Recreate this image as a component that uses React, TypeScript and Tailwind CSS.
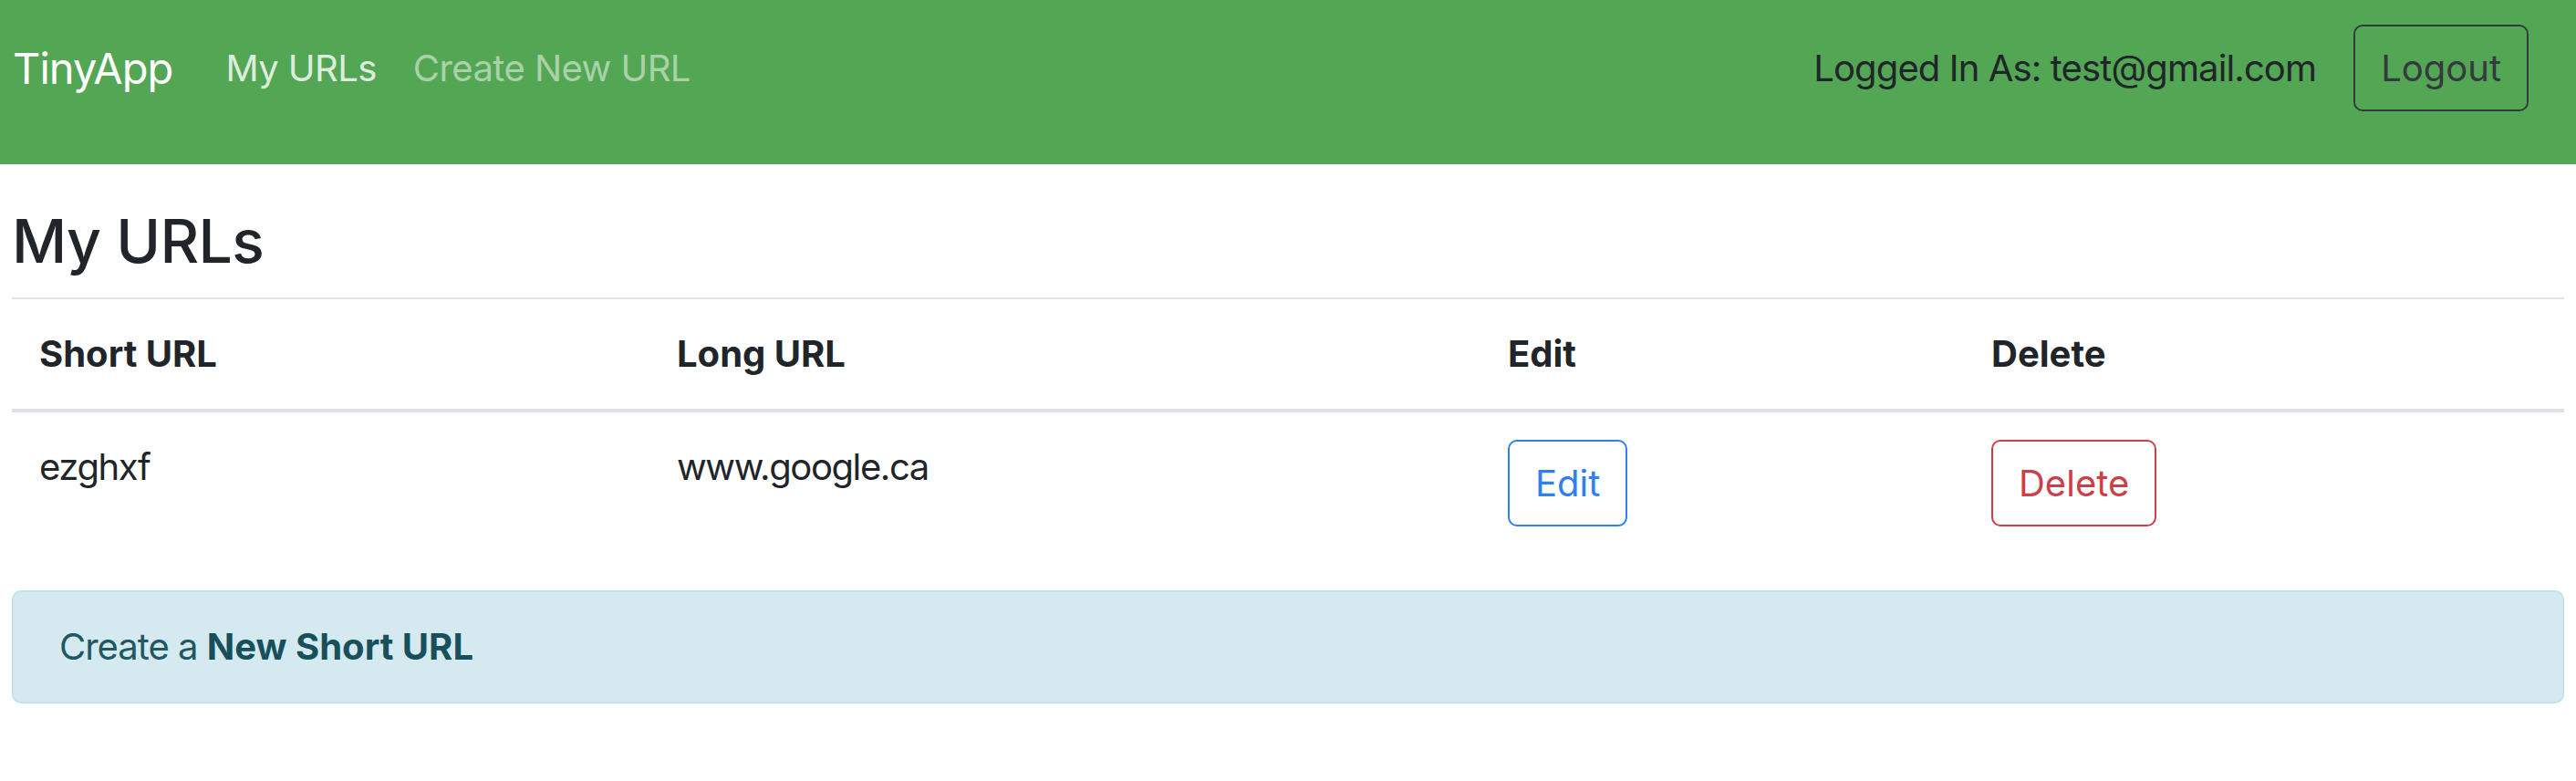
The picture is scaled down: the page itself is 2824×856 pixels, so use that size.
import React from 'react'

const urls = [{ short: 'ezghxf', long: 'www.google.ca' }]

function Navbar() {
  return (
    <nav className="h-[180px] bg-[#53a653] pl-[14px] pr-[52px] pt-[27px]">
      <div className="flex h-[95px] items-center justify-between">
        <div className="flex items-center tracking-[-0.035em]">
          <a className="mr-[38px] text-[47px] leading-[75px] tracking-[-0.02em] text-white">TinyApp</a>
          <a className="px-[20px] text-[40px] leading-[60px] text-white/80">My URLs</a>
          <a className="px-[20px] text-[40px] leading-[60px] text-white/50">Create New URL</a>
        </div>
        <div className="flex items-center gap-[41px]">
          <span className="text-[40px] leading-[60px] tracking-[-0.022em] text-[#212529]">
            Logged In As: test@gmail.com
          </span>
          <button className="h-[95px] rounded-[10px] border-2 border-[#343a40] px-[28px] text-[40px] leading-[60px] text-[#343a40]">
            Logout
          </button>
        </div>
      </div>
    </nav>
  )
}

export default function App() {
  return (
    <div className="min-h-screen bg-white font-['Inter','Liberation_Sans',sans-serif] text-[#212529]">
      <Navbar />
      <main className="px-[13px]">
        <h3 className="mt-[42px] mb-[20px] text-[66px] font-medium leading-[84px] tracking-[-0.01em]">My URLs</h3>

        {/* URL table */}
        <table className="mb-[40px] w-full table-fixed border-collapse text-left text-[40px] leading-[60px]">
          <colgroup>
            <col className="w-[699px]" />
            <col className="w-[911px]" />
            <col className="w-[530px]" />
            <col />
          </colgroup>
          <thead>
            <tr className="border-t-2 border-b-4 border-[#dee2e6]">
              <th className="p-[30px] font-bold">Short URL</th>
              <th className="p-[30px] font-bold">Long URL</th>
              <th className="p-[30px] font-bold">Edit</th>
              <th className="p-[30px] font-bold">Delete</th>
            </tr>
          </thead>
          <tbody>
            {urls.map((u) => (
              <tr key={u.short} className="tracking-[-0.035em]">
                <td className="p-[30px] align-top">{u.short}</td>
                <td className="p-[30px] align-top">{u.long}</td>
                <td className="p-[30px] align-top">
                  <button className="h-[95px] rounded-[10px] border-2 border-[#2f7ff3] px-[28px] text-[40px] leading-[60px] tracking-normal text-[#2f7ff3]">
                    Edit
                  </button>
                </td>
                <td className="p-[30px] align-top">
                  <button className="h-[95px] rounded-[10px] border-2 border-[#cc3f48] px-[28px] text-[40px] leading-[60px] tracking-normal text-[#cc3f48]">
                    Delete
                  </button>
                </td>
              </tr>
            ))}
          </tbody>
        </table>

        {/* Info alert */}
        <div className="rounded-[10px] border-2 border-[#c3e2e9] bg-[#d5eaf0] px-[50px] py-[30px] text-[40px] leading-[60px] text-[#1f5763]">
          <span className="tracking-[-0.025em]">Create a </span>
          <b className="font-bold text-[#17505b]">New Short URL</b>
        </div>
      </main>
    </div>
  )
}
